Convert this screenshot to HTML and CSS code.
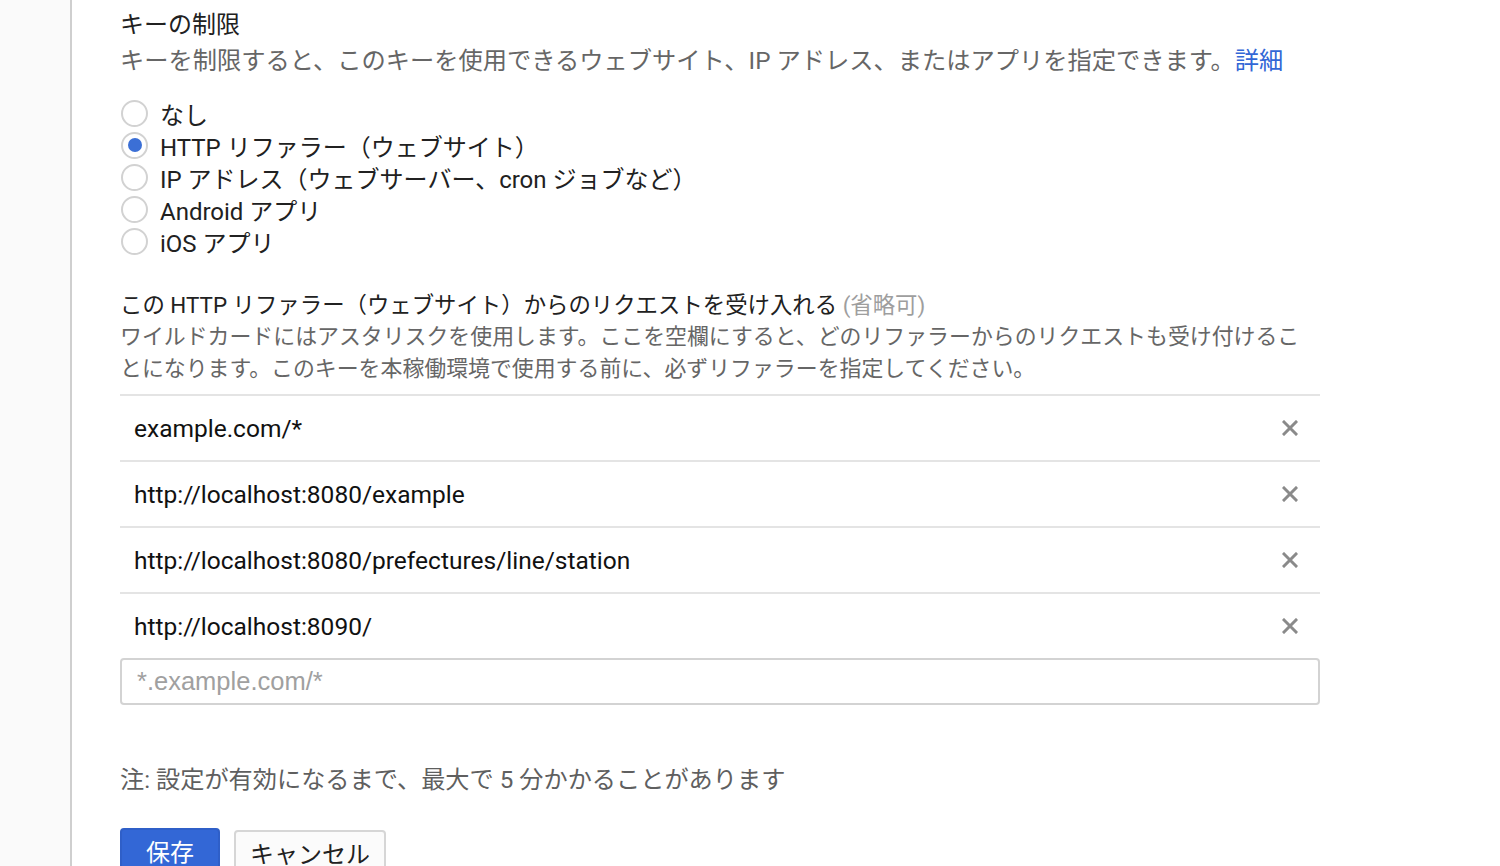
FILE: index.html
```html
<!DOCTYPE html>
<html lang="ja">
<head>
<meta charset="utf-8">
<title>キーの制限</title>
<link rel="stylesheet" href="styles.css">
</head>
<body>
<div class="page">
  <aside class="sidebar"></aside>
  <main class="main">
    <h2 class="title">キーの制限</h2>
    <p class="lead">キーを制限すると、このキーを使用できるウェブサイト、IP アドレス、またはアプリを指定できます。<a class="link" href="#">詳細</a></p>

    <div class="radios">
      <label class="radio"><span class="circle"></span><span class="rlabel">なし</span></label>
      <label class="radio"><span class="circle checked"></span><span class="rlabel">HTTP リファラー（ウェブサイト）</span></label>
      <label class="radio"><span class="circle"></span><span class="rlabel">IP アドレス（ウェブサーバー、cron ジョブなど）</span></label>
      <label class="radio"><span class="circle"></span><span class="rlabel">Android アプリ</span></label>
      <label class="radio"><span class="circle"></span><span class="rlabel">iOS アプリ</span></label>
    </div>

    <div class="section">
      <div class="stitle">この HTTP リファラー（ウェブサイト）からのリクエストを受け入れる <span class="optional">(省略可)</span></div>
      <p class="sdesc">ワイルドカードにはアスタリスクを使用します。ここを空欄にすると、どのリファラーからのリクエストも受け付けることになります。このキーを本稼働環境で使用する前に、必ずリファラーを指定してください。</p>
    </div>

    <ul class="list">
      <li class="row"><span class="url">example.com/*</span><span class="del"><svg viewBox="0 0 16 16" width="16" height="16"><path d="M2 2 L14 14 M14 2 L2 14" stroke="#8a8a8a" stroke-width="3" stroke-linecap="square" fill="none"/></svg></span></li>
      <li class="row"><span class="url">http://localhost:8080/example</span><span class="del"><svg viewBox="0 0 16 16" width="16" height="16"><path d="M2 2 L14 14 M14 2 L2 14" stroke="#8a8a8a" stroke-width="3" stroke-linecap="square" fill="none"/></svg></span></li>
      <li class="row"><span class="url">http://localhost:8080/prefectures/line/station</span><span class="del"><svg viewBox="0 0 16 16" width="16" height="16"><path d="M2 2 L14 14 M14 2 L2 14" stroke="#8a8a8a" stroke-width="3" stroke-linecap="square" fill="none"/></svg></span></li>
      <li class="row"><span class="url">http://localhost:8090/</span><span class="del"><svg viewBox="0 0 16 16" width="16" height="16"><path d="M2 2 L14 14 M14 2 L2 14" stroke="#8a8a8a" stroke-width="3" stroke-linecap="square" fill="none"/></svg></span></li>
    </ul>
    <input class="input" type="text" placeholder="*.example.com/*">

    <p class="note">注: 設定が有効になるまで、最大で 5 分かかることがあります</p>

    <div class="buttons">
      <button class="btn primary">保存</button>
      <button class="btn secondary">キャンセル</button>
    </div>
  </main>
</div>
</body>
</html>
```

FILE: styles.css
```css
html, body {
  margin: 0;
  padding: 0;
  background: #ffffff;
  height: 100%;
  overflow: hidden;
}
body {
  font-family: Roboto, "Noto Sans CJK JP", sans-serif;
  color: #212121;
}
.page {
  display: flex;
  min-height: 866px;
}
.sidebar {
  width: 70px;
  flex: 0 0 70px;
  background: #fafafa;
  border-right: 2px solid #cfcfcf;
}
.main {
  flex: 1;
  padding: 7px 0 0 48px;
}
.title {
  margin: 0;
  font-size: 24px;
  font-weight: normal;
  line-height: 36px;
  color: #212121;
}
.lead {
  margin: 0;
  font-size: 24.25px;
  line-height: 36px;
  color: #666666;
}
.link {
  color: #3367d6;
  text-decoration: none;
}
.radios {
  margin-top: 18px;
  display: flex;
  flex-direction: column;
}
.radio {
  display: flex;
  align-items: center;
  height: 32px;
  font-size: 24px;
  color: #212121;
}
.circle {
  box-sizing: border-box;
  width: 27px;
  height: 27px;
  border: 2px solid #d2d2d2;
  border-radius: 50%;
  margin-left: 1px;
  margin-right: 12px;
  display: flex;
  align-items: center;
  justify-content: center;
}
.circle.checked::after {
  content: "";
  width: 14px;
  height: 14px;
  border-radius: 50%;
  background: #3b6fd6;
}
.section {
  margin-top: 32px;
}
.stitle {
  font-size: 22.4px;
  line-height: 32px;
  color: #212121;
}
.optional {
  color: #9e9e9e;
}
.sdesc {
  margin: 0;
  font-size: 21.9px;
  line-height: 32px;
  color: #666666;
  max-width: 1200px;
}
.list {
  list-style: none;
  margin: 9px 0 0 0;
  padding: 0;
  width: 1200px;
}
.row {
  box-sizing: border-box;
  height: 66px;
  border-top: 2px solid #e4e4e4;
  display: flex;
  align-items: center;
  justify-content: space-between;
  padding: 0 22px 0 14px;
}
.url {
  font-size: 24.5px;
  color: #111111;
}
.del {
  display: flex;
  width: 16px;
  height: 16px;
}
.input {
  display: block;
  box-sizing: border-box;
  width: 1200px;
  height: 47px;
  border: 2px solid #d3d3d3;
  border-radius: 4px;
  padding: 0 15px;
  font-family: "Liberation Sans", Arial, sans-serif;
  font-size: 25.5px;
  color: #212121;
  outline: none;
}
.input::placeholder {
  color: #a0a0a0;
}
.note {
  margin: 57px 0 0 0;
  font-size: 24.2px;
  line-height: 36px;
  color: #5f5f5f;
}
.buttons {
  margin-top: 30px;
  display: flex;
  gap: 14px;
}
.btn {
  box-sizing: border-box;
  height: 50px;
  font-family: Roboto, "Noto Sans CJK JP", sans-serif;
  font-size: 24px;
  border-radius: 4px;
  padding: 0 24px;
  line-height: 1;
}
.primary {
  width: 100px;
  background: #3367d6;
  border: 2px solid #2f5fc8;
  color: #ffffff;
}
.secondary {
  width: 152px;
  margin-top: 2px;
  background: #fbfbfb;
  border: 2px solid #d6d6d6;
  color: #212121;
  padding: 0 12px;
}
```
